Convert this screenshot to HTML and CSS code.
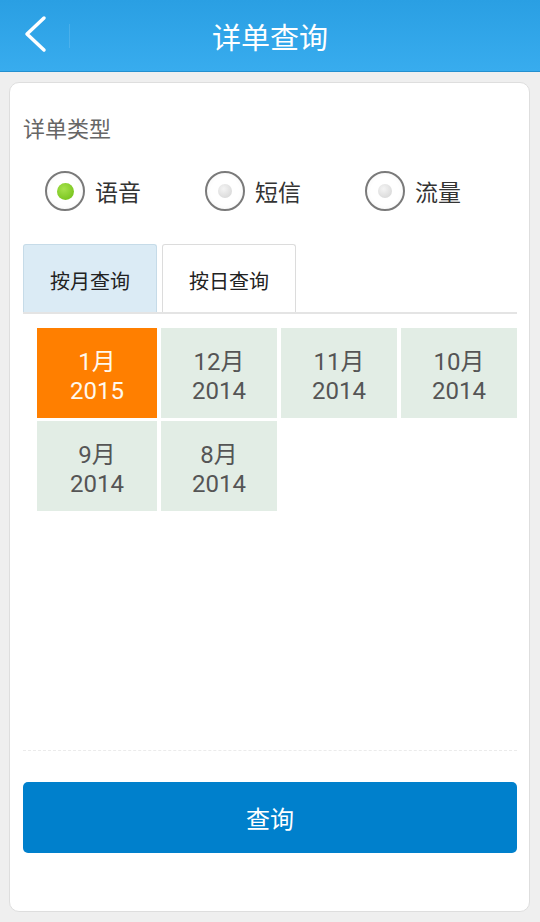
FILE: index.html
```html
<!DOCTYPE html>
<html lang="zh-CN">
<head>
    <meta charset="UTF-8">
    <title>详单查询</title>
    <link rel="stylesheet" href="styles.css">
</head>
<body>

<div class="topbar">
    <div class="back">
        <svg width="70" height="72" viewBox="0 0 70 72">
            <polyline points="44,18 27,34 44,50" fill="none" stroke="#fff" stroke-width="3.5" stroke-linecap="round" stroke-linejoin="round"/>
        </svg>
    </div>
    <h1>详单查询</h1>
    <div></div>
</div>

<div class="card">
    <div class="label">详单类型</div>

    <div class="radios">
        <div class="radio checked"><span class="ring"><span class="dot"></span></span>语音</div>
        <div class="radio"><span class="ring"><span class="dot"></span></span>短信</div>
        <div class="radio"><span class="ring"><span class="dot"></span></span>流量</div>
    </div>

    <div class="tabs">
        <div class="tab active">按月查询</div>
        <div class="tab">按日查询</div>
    </div>

    <div class="months">
        <div class="month selected">1月<br>2015</div>
        <div class="month">12月<br>2014</div>
        <div class="month">11月<br>2014</div>
        <div class="month">10月<br>2014</div>
        <div class="month">9月<br>2014</div>
        <div class="month">8月<br>2014</div>
    </div>

    <div class="spacer"></div>
    <div class="dashed"></div>

    <button class="query">查询</button>
</div>

</body>
</html>
```

FILE: styles.css
```css
* {
    box-sizing: border-box;
}

body {
    margin: 0;
    background: #efefef;
    font-family: "Noto Sans CJK SC", "Noto Sans", sans-serif;
}

.topbar {
    height: 72px;
    display: grid;
    grid-template-columns: 70px 1fr 70px;
    align-items: center;
    background: linear-gradient(to bottom, #2a9fe3, #38acee);
    border-bottom: 1px solid #2490cf;
}

.back {
    height: 72px;
    position: relative;
}

.back svg {
    display: block;
}

.back::after {
    content: "";
    position: absolute;
    right: 0;
    top: 24px;
    height: 24px;
    width: 1px;
    background: rgba(255, 255, 255, 0.12);
}

.topbar h1 {
    margin: 0;
    text-align: center;
    color: #fff;
    font-size: 29px;
    font-weight: normal;
    line-height: 72px;
}

.card {
    margin: 10px 10px 0 9px;
    height: 830px;
    background: #fff;
    border: 1px solid #dedede;
    border-radius: 10px;
    padding: 0 12px 0 13px;
    display: flex;
    flex-direction: column;
}

.label {
    margin-top: 29px;
    line-height: 30px;
    font-size: 22px;
    color: #666;
}

.radios {
    margin-top: 29px;
    padding-left: 22px;
    display: grid;
    grid-template-columns: 160px 160px 160px;
}

.radio {
    display: flex;
    align-items: center;
    gap: 10px;
    height: 40px;
    font-size: 23px;
    color: #333;
}

.ring {
    width: 40px;
    height: 40px;
    border-radius: 50%;
    border: 2px solid #7a7a7a;
    background: radial-gradient(circle, #fff 55%, #f2f2f2);
    display: flex;
    align-items: center;
    justify-content: center;
}

.dot {
    width: 14px;
    height: 14px;
    border-radius: 50%;
    background: radial-gradient(circle at 40% 35%, #f4f4f4, #d2d2d2);
}

.checked .dot {
    width: 17px;
    height: 17px;
    background: radial-gradient(circle at 40% 35%, #a6e24c, #6cbc12);
}

.tabs {
    margin-top: 33px;
    display: flex;
    gap: 5px;
    border-bottom: 2px solid #e4e4e4;
}

.tab {
    width: 134px;
    height: 68px;
    padding-top: 4px;
    line-height: 64px;
    text-align: center;
    font-size: 20px;
    color: #222;
    background: #fff;
    border: 1px solid #dcdcdc;
    border-bottom: none;
    border-radius: 3px 3px 0 0;
}

.tab.active {
    background: #dbebf5;
    border-color: #c6dbe8;
}

.months {
    margin: 14px 0 0 14px;
    display: grid;
    grid-template-columns: 120px 116px 116px 116px;
    grid-auto-rows: 90px;
    column-gap: 4px;
    row-gap: 3px;
}

.month {
    padding-top: 8px;
    background: #e2ede5;
    color: #555;
    font-family: Roboto, "Noto Sans CJK SC", sans-serif;
    font-size: 24px;
    line-height: 29px;
    text-align: center;
    display: flex;
    align-items: center;
    justify-content: center;
}

.month.selected {
    background: #ff7f00;
    color: #fff8ec;
}

.spacer {
    flex: 1;
}

.dashed {
    border-top: 1px dashed #ebebeb;
}

.query {
    margin: 31px 0 58px;
    height: 71px;
    border: none;
    border-radius: 5px;
    background: #0080cc;
    color: #fff;
    font-family: "Noto Sans CJK SC", sans-serif;
    font-size: 24px;
}
```
